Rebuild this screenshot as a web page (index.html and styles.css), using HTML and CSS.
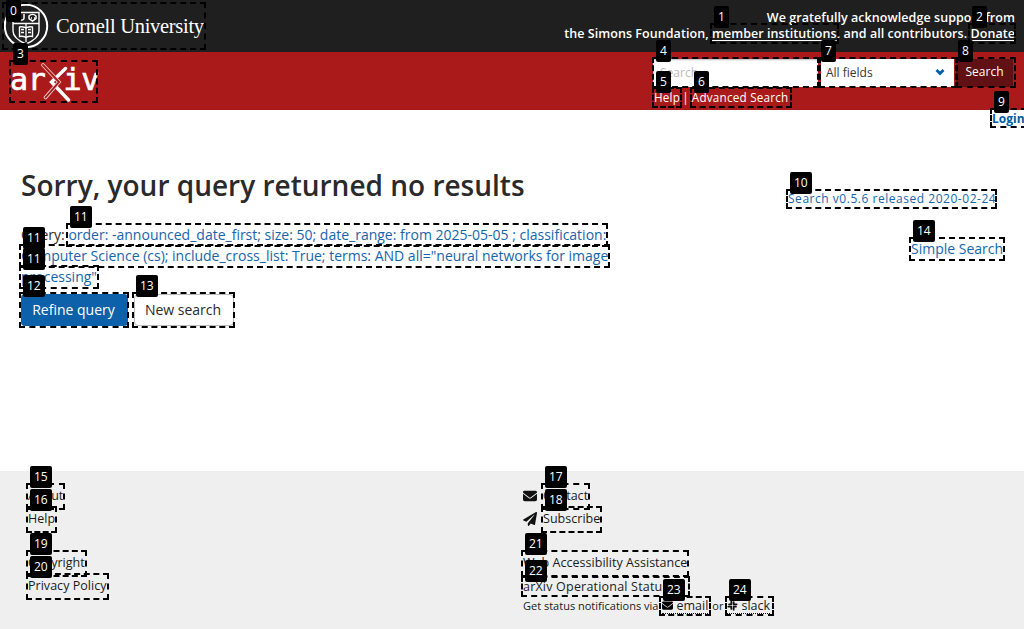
FILE: index.html
```html
<!DOCTYPE html>
<html lang="en">
<head>
<meta charset="utf-8">
<title>Search | arXiv e-print repository</title>
<link rel="stylesheet" href="styles.css">
</head>
<body>
<header>
  <div class="attribution">
    <a class="cornell">
      <svg class="seal" viewBox="0 0 46 46" fill="none" stroke="#fff">
        <circle cx="23" cy="23" r="21.2" stroke-width="2"/>
        <path d="M10 9.500h26v18.500c0 6-6 10-13 13-7-3-13-7-13-13z" stroke-width="1.400"/>
        <path d="M10 20.500h26M23 21v18" stroke-width="1.300"/>
        <path d="M16.500 24c3-1 4.500 0 6.500 1 2-1 3.500-2 6.500-1v9.500c-3-1-4.500 0-6.500 1-2-1-3.500-2-6.500-1z" stroke-width="1.400"/>
        <path d="M18 26.500h3m-3 3h3m4-3h3m-3 3h3M13 11v4c0 3 8 3 8 0v-4M26 13c2-2 5-2 7 0v2.500l-3.500 2.500-3.500-2.500zM28 15h1m2 0h1" stroke-width="1.500"/>
      </svg>
      <span class="cornell-name">Cornell University</span>
    </a>
    <p class="thanks"><span class="line-a">We gratefully acknowledge support from</span><br><span class="line-b">the Simons Foundation, <a class="under">member institutions</a>. and all contributors. <a class="under">Donate</a></span></p>
  </div>
  <div class="banner">
    <div class="arxiv">
      <span class="ar">ar</span>
      <svg class="chi" viewBox="0 0 30 39" fill="none">
        <path d="M24.500 5.500 10.500 19 27.500 37" stroke="#fff" stroke-width="3.400" stroke-linecap="round"/>
        <path d="M2 2 18 19 4.500 34.500" stroke="#f0caca" stroke-width="3.600" stroke-linecap="round"/>
        <path d="M2 2 18 19 4.500 34.500" stroke="#aa1a1a" stroke-width="1.900" stroke-linecap="round"/>
      </svg>
      <span class="iv">iv</span>
    </div>
    <div class="search">
      <div class="controls">
        <div class="input"><span class="placeholder">Search...</span></div>
        <div class="select"><span class="fields">All fields</span><svg width="10" height="8" viewBox="0 0 10 8" fill="none" stroke="#005ca8" stroke-width="2.800"><path d="m1.500 2 3.500 3.500L8.500 2"/></svg></div>
        <div class="go"><span class="go-text">Search</span></div>
      </div>
      <p class="help"><span class="help-a">Help</span><span class="bar">|</span><span class="help-b">Advanced Search</span></p>
    </div>
  </div>
</header>
<div class="login"><span class="login-text">Login</span></div>
<main>
  <div class="results">
    <h1>Sorry, your query returned no results</h1>
    <p class="query">Query: <a>order: -announced_date_first; size: 50; date_range: from 2025-05-05 ; classification:<br>Computer Science (cs); include_cross_list: True; terms: AND all="neural networks for image<br>processing"</a></p>
    <div class="buttons"><a class="primary">Refine query</a><a class="plain">New search</a></div>
  </div>
  <aside><a class="version">Search v0.5.6 released 2020-02-24</a><a class="simple">Simple Search</a></aside>
</main>
<footer>
  <div class="column">
    <ul><li>About</li><li>Help</li></ul>
    <ul><li>Copyright</li><li>Privacy Policy</li></ul>
  </div>
  <div class="column right">
    <ul>
      <li><svg class="icon" viewBox="0 0 512 512"><path d="M48 64a48 48 0 0 0-29 86l218 164q19 14 38 0l218-164a48 48 0 0 0-29-86zM0 176v208a64 64 0 0 0 64 64h384a64 64 0 0 0 64-64V176L294 339q-38 28-76 0z"/></svg>Contact</li>
      <li><svg class="icon" viewBox="0 0 512 512"><path d="M476 3 12 271c-18 10-15 36 3 43l107 45L410 105c5-5 13 2 8 8L176 407v81c0 23 28 32 42 15l64-78 126 53c14 6 30-3 33-19l72-432c3-20-18-35-37-24z"/></svg>Subscribe</li>
    </ul>
    <ul><li>Web Accessibility Assistance</li></ul>
    <p class="status">arXiv Operational Status</p>
    <p class="notify"><span class="via">Get status notifications via</span>
      <span class="mail"><svg class="small" viewBox="0 0 512 512"><path d="M48 64a48 48 0 0 0-29 86l218 164q19 14 38 0l218-164a48 48 0 0 0-29-86zM0 176v208a64 64 0 0 0 64 64h384a64 64 0 0 0 64-64V176L294 339q-38 28-76 0z"/></svg><b>email</b></span><span class="or">or</span><span class="slack"><svg class="small" viewBox="0 0 16 16" fill="none" stroke="#111" stroke-width="2.600" stroke-linecap="round"><path d="M6.300 2v4M9.700 3v3.500M11.500 6.300h2.500M3 6.300h3.300M2 9.700h2.500M9.700 9.700h3.300M6.300 9.700V13M9.700 11.500v2.500"/></svg><b>slack</b></span></p>
  </div>
</footer>
<div class="marks">
  <div class="mark" style="left:2px;top:2px;width:204px;height:48px"></div>
  <div class="mark" style="left:710px;top:23px;width:129px;height:21px"></div>
  <div class="mark" style="left:968px;top:23px;width:48px;height:21px"></div>
  <div class="mark" style="left:9px;top:60px;width:89px;height:43px"></div>
  <div class="mark" style="left:652px;top:57px;width:167px;height:31px"></div>
  <div class="mark" style="left:652px;top:87px;width:30px;height:21px"></div>
  <div class="mark" style="left:690px;top:87px;width:102px;height:21px"></div>
  <div class="mark" style="left:819px;top:57px;width:138px;height:31px"></div>
  <div class="mark" style="left:956px;top:57px;width:60px;height:31px"></div>
  <div class="mark" style="left:990px;top:108px;width:37px;height:20px"></div>
  <div class="mark" style="left:786px;top:189px;width:211px;height:20px"></div>
  <div class="mark" style="left:66px;top:223px;width:542px;height:24px"></div>
  <div class="mark" style="left:19px;top:244px;width:591px;height:24px"></div>
  <div class="mark" style="left:19px;top:265px;width:80px;height:24px"></div>
  <div class="mark" style="left:19px;top:292px;width:110px;height:36px"></div>
  <div class="mark" style="left:132px;top:292px;width:103px;height:36px"></div>
  <div class="mark" style="left:909px;top:237px;width:96px;height:24px"></div>
  <div class="mark" style="left:26px;top:483px;width:39px;height:27px"></div>
  <div class="mark" style="left:26px;top:506px;width:31px;height:27px"></div>
  <div class="mark" style="left:541px;top:483px;width:49px;height:27px"></div>
  <div class="mark" style="left:541px;top:506px;width:61px;height:27px"></div>
  <div class="mark" style="left:26px;top:550px;width:61px;height:27px"></div>
  <div class="mark" style="left:26px;top:573px;width:83px;height:27px"></div>
  <div class="mark" style="left:521px;top:550px;width:168px;height:27px"></div>
  <div class="mark" style="left:521px;top:576px;width:169px;height:21px"></div>
  <div class="mark" style="left:659px;top:596px;width:52px;height:20px"></div>
  <div class="mark" style="left:725px;top:596px;width:49px;height:20px"></div>
  <span class="tag" style="left:6px;top:0px">0</span>
  <span class="tag" style="left:714px;top:6px">1</span>
  <span class="tag" style="left:972px;top:6px">2</span>
  <span class="tag" style="left:13px;top:43px">3</span>
  <span class="tag" style="left:656px;top:40px">4</span>
  <span class="tag" style="left:656px;top:71px">5</span>
  <span class="tag" style="left:694px;top:71px">6</span>
  <span class="tag" style="left:821px;top:40px">7</span>
  <span class="tag" style="left:958px;top:40px">8</span>
  <span class="tag" style="left:994px;top:91px">9</span>
  <span class="tag" style="left:790px;top:172px">10</span>
  <span class="tag" style="left:70px;top:206px">11</span>
  <span class="tag" style="left:23px;top:227px">11</span>
  <span class="tag" style="left:23px;top:248px">11</span>
  <span class="tag" style="left:23px;top:275px">12</span>
  <span class="tag" style="left:136px;top:275px">13</span>
  <span class="tag" style="left:913px;top:220px">14</span>
  <span class="tag" style="left:30px;top:466px">15</span>
  <span class="tag" style="left:30px;top:489px">16</span>
  <span class="tag" style="left:545px;top:466px">17</span>
  <span class="tag" style="left:545px;top:489px">18</span>
  <span class="tag" style="left:30px;top:533px">19</span>
  <span class="tag" style="left:30px;top:556px">20</span>
  <span class="tag" style="left:525px;top:533px">21</span>
  <span class="tag" style="left:525px;top:560px">22</span>
  <span class="tag" style="left:663px;top:579px">23</span>
  <span class="tag" style="left:729px;top:579px">24</span>
</div>
</body>
</html>
```
FILE: styles.css
```css
* { box-sizing: border-box; }
body { margin: 0; width: 1024px; height: 629px; overflow: hidden; background: #fff; color: #2a2a2a; font: 14px/21px "Open Sans", "Noto Sans", sans-serif; display: flex; flex-direction: column; }
p, h1, ul { margin: 0; padding: 0; white-space: nowrap; }
li { list-style: none; }
svg { flex: none; }
.attribution { height: 52px; background: #1f1f1f; color: #fff; display: flex; justify-content: space-between; padding: 0 9px 0 3px; }
.cornell { display: flex; align-items: center; gap: 7px; }
.seal { width: 46px; height: 46px; }
.cornell-name { font: 20.5px/28px "Liberation Serif", serif; letter-spacing: -.3px; }
.thanks { padding-top: 10px; text-align: right; font: 600 12.5px/16px "Open Sans", sans-serif; letter-spacing: .06px; }
.under { text-decoration: underline; text-underline-offset: 2px; }
.banner { height: 58px; background: #aa1a1a; color: #fff; display: flex; justify-content: space-between; padding: 6px 10px 0 9px; }
.arxiv { display: flex; height: 44px; align-items: center; }
.ar, .iv { font: 400 30px/38px "DejaVu Sans Mono", monospace; -webkit-text-stroke: .7px #fff; letter-spacing: -.3px; }
.ar { margin-left: 1px; }
.chi { width: 30px; height: 39px; margin: 4px -7px 0 -5px; }
.search { width: 361px; }
.controls { display: flex; gap: 3px; }
.input { width: 165px; height: 28px; margin-top: 1px; background: #fff; box-shadow: inset 0 1px 2px #bbb; color: #bbb; padding: 3px 7px; font-size: 12px; }
.select { width: 133px; height: 28px; margin-top: 1px; background: #fff; color: #363636; display: flex; align-items: center; justify-content: space-between; padding: 0 9px 2px 5px; font-size: 12px; }
.go { width: 57px; height: 28px; margin: 1px 0 0 -1px; background: #611113; text-align: center; font-size: 12px; line-height: 26px; }
.help { display: flex; gap: 4px; padding: 0 0 0 1px; font-size: 11.7px; line-height: 20px; letter-spacing: .22px; }
.bar { margin: 0 -1px 0 -2px; }
.login { height: 18px; color: #005ca8; font-size: 12px; line-height: 18px; font-weight: 700; padding-left: 992px; }
main { height: 343px; display: flex; justify-content: space-between; padding: 0 21px; }
h1 { padding-top: 40px; font-weight: 600; font-size: 28px; line-height: 35px; height: 76px; color: #2a2a2a; }
.query { margin-top: 20px; }
.query a, aside a { color: #1565ab; }
.buttons { display: flex; gap: 6px; margin-top: 7px; }
.primary, .plain { height: 32px; border-radius: 4px; text-align: center; }
.primary { width: 107px; padding-right: 2px; background: #0d60aa; color: #fff; line-height: 32px; }
.plain { width: 100px; padding-right: 2px; border: 1px solid #bbb; line-height: 30px; }
aside { width: 215px; display: flex; flex-direction: column; white-space: nowrap; padding-top: 61px; }
.version { font-size: 12px; line-height: 20px; letter-spacing: .53px; }
.simple { margin: 29px 0 0 123px; }
footer { height: 158px; background: #efefef; color: #1b1b1b; display: flex; font-size: 12.5px; line-height: 23px; padding: 13px 28px 0; }
.column { width: 495px; }
.column ul + ul { margin-top: 21px; }
.column li { display: flex; align-items: center; height: 23px; line-height: 22px; letter-spacing: .03px; }
.right { width: 460px; }
.icon { width: 14px; height: 14px; margin-right: 6px; fill: #111; }
.status { font-size: 12.5px; line-height: 26px; height: 24px; letter-spacing: .2px; }
.notify { display: flex; line-height: 16px; font-size: 11px; }
.mail, .slack { display: flex; align-items: center; gap: 3px; border-bottom: 1px dotted #111; height: 16px; }
.mail { margin-left: 4px; }
.or { margin: 0 4px; }
.small { width: 11px; height: 11px; }
b { font-weight: 400; font-size: 12.5px; }
.marks { position: absolute; inset: 0; overflow: hidden; pointer-events: none; }
.mark { position: absolute; border: 2px dashed #000; }
.tag { position: absolute; height: 22px; padding: 0 4px; border-radius: 2px; background: #000; color: #fff; font: 12px/22px "Open Sans", sans-serif; }
```
